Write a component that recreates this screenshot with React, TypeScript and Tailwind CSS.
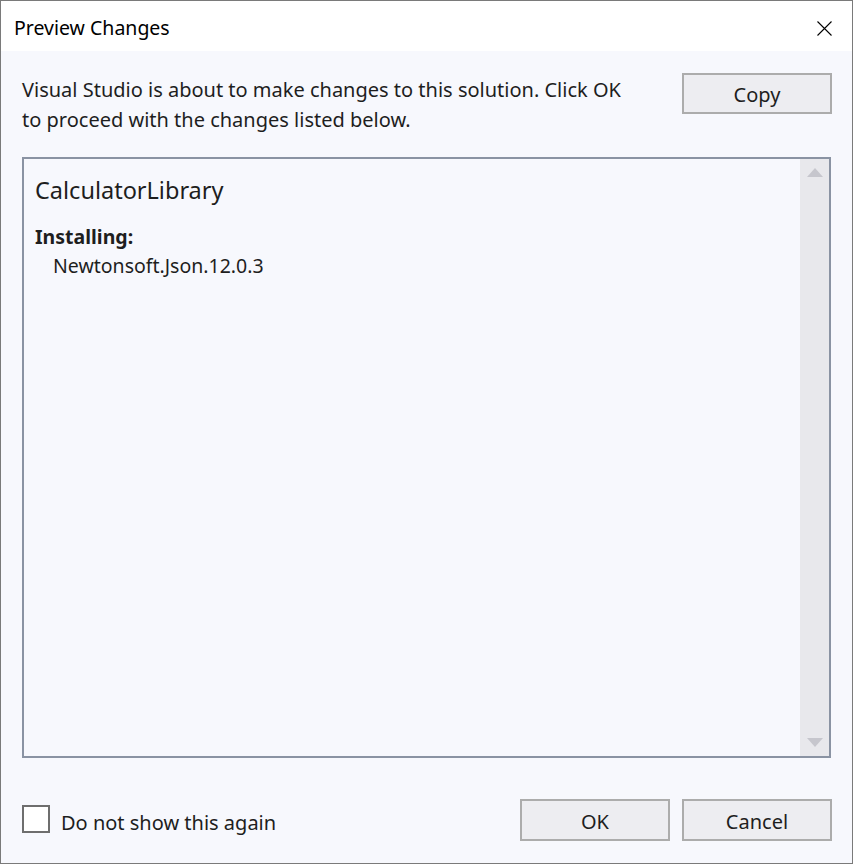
export default function App() {
  return (
    <div className="w-[853px] h-[864px] border border-[#7a7a7a] bg-[#f7f8fd] flex flex-col text-[#1e1e1e] font-['Noto_Sans',sans-serif]">
      {/* title bar */}
      <div className="h-[50px] shrink-0 bg-white flex items-center justify-between pl-[13px] pr-[20px]">
        <span className="text-[19.5px] text-black mt-[4px]">Preview Changes</span>
        <svg width="15" height="15" viewBox="0 0 15 15" className="mt-[4px]">
          <path d="M0.5 0.5 L14.5 14.5 M14.5 0.5 L0.5 14.5" stroke="#000" strokeWidth="1.1" />
        </svg>
      </div>

      <div className="flex flex-col px-[21px]">
        <div className="flex justify-between items-start pt-[22px]">
          <p className="text-[20px] leading-[30px] mt-[2px] w-[610px]">
            Visual Studio is about to make changes to this solution. Click OK
            to proceed with the changes listed below.
          </p>
          <button className="w-[150px] h-[41px] pt-[3px] border-2 border-[#acacac] bg-[#ededf1] text-[20px] mr-[-1px]">
            Copy
          </button>
        </div>

        <div className="mt-[22px] h-[601px] border-2 border-[#8a93a3] flex">
          <div className="flex-1 pl-[11px] pt-[15px]">
            <div className="text-[23.5px] leading-[32px]">CalculatorLibrary</div>
            <div className="text-[19.5px] font-bold leading-[26px] mt-[18px]">Installing:</div>
            <div className="text-[19.5px] leading-[26px] pl-[18px] mt-[3px]">Newtonsoft.Json.12.0.3</div>
          </div>
          <div className="w-[29px] bg-[#e8e8ec] flex flex-col justify-between items-center py-[9px]">
            <svg width="16" height="9" viewBox="0 0 16 9">
              <path d="M8 0 L16 9 L0 9 Z" fill="#c6c6cd" />
            </svg>
            <svg width="16" height="9" viewBox="0 0 16 9">
              <path d="M0 0 L16 0 L8 9 Z" fill="#c6c6cd" />
            </svg>
          </div>
        </div>

        <div className="mt-[41px] h-[42px] flex items-center justify-between">
          <label className="flex items-center gap-[11px] mt-[6px]">
            <span className="w-[28px] h-[28px] mb-[8px] border-2 border-[#6e6e6e] bg-white inline-block" />
            <span className="text-[20px]">Do not show this again</span>
          </label>
          <div className="flex gap-[12px] mr-[-1px]">
            <button className="w-[150px] h-[42px] pt-[3px] border-2 border-[#acacac] bg-[#ededf1] text-[20px]">
              OK
            </button>
            <button className="w-[150px] h-[42px] pt-[3px] border-2 border-[#acacac] bg-[#ededf1] text-[20px]">
              Cancel
            </button>
          </div>
        </div>
      </div>
    </div>
  );
}
